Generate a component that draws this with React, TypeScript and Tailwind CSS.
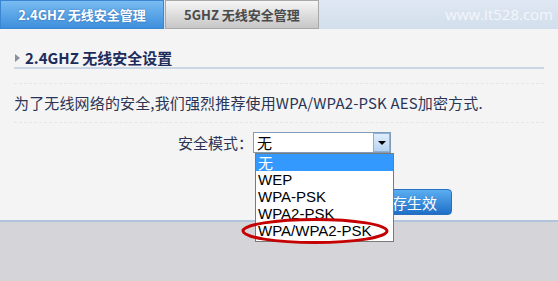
import React from "react";

const cjk = { fontFamily: '"Noto Sans CJK SC", "Liberation Sans", sans-serif' };
const arial = { fontFamily: '"Liberation Sans", Arial, sans-serif' };

export default function App() {
  const items = ["无", "WEP", "WPA-PSK", "WPA2-PSK", "WPA/WPA2-PSK"];
  return (
    <div className="relative w-[558px] h-[281px] overflow-hidden bg-[#d5d4d9] flex flex-col" style={cjk}>
      {/* Tab bar */}
      <div className="h-[29px] flex items-stretch bg-gradient-to-b from-[#dfe8f3] to-[#d3deec]">
        <div className="w-[164px] flex items-center justify-center border border-[#3b86d2] bg-gradient-to-b from-[#78bcf2] to-[#3d8fdc] text-white text-[13px] font-bold leading-none [text-shadow:0_0_2px_rgba(0,40,120,0.5)]">
          2.4GHZ 无线安全管理
        </div>
        <div className="ml-[1px] w-[154px] flex items-center justify-center border border-[#a9a9a9] bg-gradient-to-b from-[#f6f6f6] to-[#c6c6c6] text-[#4a4a4a] text-[13px] font-bold leading-none">
          5GHZ 无线安全管理
        </div>
        <div className="ml-auto pr-[5px] flex items-center text-[15px] text-[#f3f6fb]" style={{ fontFamily: '"Open Sans", sans-serif' }}>
          www.it528.com
        </div>
      </div>

      {/* Content */}
      <div className="h-[193px] bg-[#f4f4f4] border-b-2 border-[#b0c4dc] px-[14px] flex flex-col">
        <div className="pt-[19px] pb-0 h-[40px] border-b-2 border-[#c9d6e3] flex items-start">
          <span className="mt-[6px] ml-[1px] w-0 h-0 border-y-[4px] border-y-transparent border-l-[5px] border-l-[#8a8f99]" />
          <span className="ml-[5px] text-[15px] leading-[20px] font-bold text-[#1c2c5c]">2.4GHZ 无线安全设置</span>
        </div>
        <div className="mt-[14px] border-t border-dashed border-[#e6e6e6]" />
        <p className="mt-[9px] text-[15px] leading-[20px] tracking-[0.15px] text-[#2a3556] whitespace-nowrap">
          为了无线网络的安全,我们强烈推荐使用WPA/WPA2-PSK AES加密方式.
        </p>
        <div className="mt-[9px] border-t border-dashed border-[#e6e6e6]" />
        <div className="mt-[9px] pl-[164px] flex items-center h-[21px]">
          <span className="w-[75px] text-[15px] leading-[21px] text-[#2a3556] whitespace-nowrap">安全模式：</span>
          <div className="relative z-10 w-[138px] h-[21px] border border-[#7f9db9] bg-white flex">
            <span className="flex-1 pl-[3px] text-[15px] leading-[19px] text-black">无</span>
            <div className="w-[17px] h-full border border-[#8fb0d4] bg-gradient-to-b from-[#e1eefb] to-[#b7d4f1] flex items-center justify-center">
              <span className="w-0 h-0 border-x-[4px] border-x-transparent border-t-[4px] border-t-black" />
            </div>
            <div className="absolute left-[1px] top-[20px] w-[139px] border border-[#7a7a7a] bg-white pb-[2px]" style={arial}>
              {items.map((t, i) => (
                <div
                  key={t}
                  className={
                    i === 0
                      ? "h-[17px] pl-[2px] text-[15px] leading-[17px] bg-[#3399ff] text-white"
                      : "h-[17px] pl-[2px] text-[15px] leading-[17px] text-black"
                  }
                  style={i === 0 ? cjk : undefined}
                >
                  {t}
                </div>
              ))}
            </div>
          </div>
        </div>
        <div className="mt-[36px] ml-[354px] w-[84px] h-[26px] rounded-[4px] border border-[#2a6fbf] bg-gradient-to-b from-[#5aaef0] to-[#1f6fc8] flex items-center justify-end pr-[14px] text-white text-[15px] leading-none">
          保存生效
        </div>
      </div>

      {/* Red annotation ellipse */}
      <svg className="absolute left-[240px] top-[216px] z-20" width="152" height="30" viewBox="0 0 152 30">
        <ellipse cx="75" cy="15" rx="72" ry="11.5" fill="none" stroke="#c40000" strokeWidth="3" />
      </svg>
    </div>
  );
}
